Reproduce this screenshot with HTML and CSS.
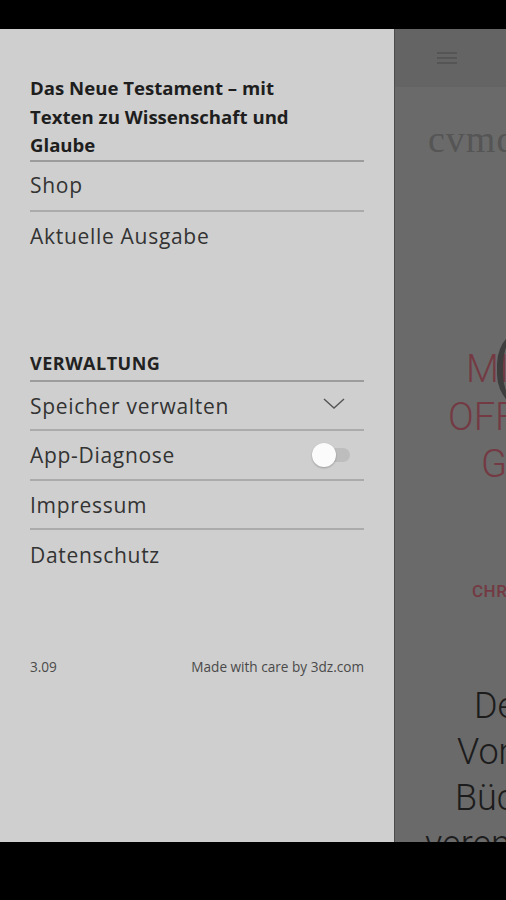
FILE: index.html
```html
<!DOCTYPE html>
<html lang="de">
<head>
<meta charset="utf-8">
<title>Menü</title>
<link rel="stylesheet" href="styles.css">
</head>
<body>
<div class="screen">
  <div class="statusbar"></div>
  <div class="app">
    <nav class="drawer">
      <h1 class="title">Das Neue Testament – mit Texten zu Wissenschaft und Glaube</h1>
      <ul class="list">
        <li class="item">Shop</li>
        <li class="item last">Aktuelle Ausgabe</li>
      </ul>
      <h2 class="section">VERWALTUNG</h2>
      <ul class="list lower">
        <li class="item row">Speicher verwalten
          <svg class="chevron" width="24" height="14" viewBox="0 0 24 14"><path d="M2 2 L12 11 L22 2" fill="none" stroke="#555" stroke-width="1.4"/></svg>
        </li>
        <li class="item row">App-Diagnose
          <span class="toggle"><span class="thumb"></span></span>
        </li>
        <li class="item">Impressum</li>
        <li class="item last">Datenschutz</li>
      </ul>
      <footer class="footer">
        <span>3.09</span>
        <span>Made with care by 3dz.com</span>
      </footer>
    </nav>
    <main class="content">
      <header class="topbar">
        <span class="burger"><i></i><i></i><i></i></span>
      </header>
      <div class="logo">cvmd</div>
      <div class="hero">
        <div class="hero-art"></div>
        <p class="hl l1">MIT</p>
        <p class="hl l2">OFFENEN</p>
        <p class="hl l3">GEDANKEN</p>
      </div>
      <p class="kicker">CHRISTEN</p>
      <div class="lead">
        <p class="ld d1">Der</p>
        <p class="ld d2">Vom</p>
        <p class="ld d3">Bücher</p>
        <p class="ld d4">verenden</p>
      </div>
    </main>
  </div>
  <div class="navbar"></div>
</div>
</body>
</html>
```

FILE: styles.css
```css
* { box-sizing: border-box; }
html, body { margin: 0; padding: 0; background: #000; }
.screen { width: 506px; height: 900px; display: flex; flex-direction: column; overflow: hidden; }
.statusbar { height: 29px; background: #000; flex: none; }
.navbar { height: 58px; background: #000; flex: none; }
.app { flex: 1; display: flex; min-height: 0; }

.drawer {
  width: 395px; flex: none;
  background: #cfcfcf;
  border-right: 1px solid #4c4c4c;
  padding: 45px 30px 0 30px;
  display: flex; flex-direction: column;
  font-family: "Open Sans", "Noto Sans", sans-serif;
  color: #2a2a2a;
}
.title {
  margin: 0;
  font-size: 18.6px; font-weight: 700; line-height: 28.5px;
  color: #1e1e1e;
  padding-right: 40px;
  border-bottom: 2px solid #9c9c9c;
}
.list { list-style: none; margin: 0; padding: 0; }
.item {
  height: 50px;
  display: flex; align-items: center;
  font-size: 21px; letter-spacing: 0.7px; color: #333;
  border-bottom: 2px solid #ababab;
  padding-bottom: 1px;
}
.lower .item { height: 49.5px; padding-bottom: 0; padding-top: 1px; }
.item.last { border-bottom: none; }
.row { justify-content: space-between; }
.chevron { margin-right: 18px; margin-top: -4px; }
.toggle {
  position: relative;
  width: 36px; height: 14px; border-radius: 7px;
  background: #bdbdbd; margin-right: 14px;
}
.thumb {
  position: absolute; left: -2px; top: -5px;
  width: 24px; height: 24px; border-radius: 50%;
  background: #fbfbfb;
  box-shadow: 0 1px 2px rgba(0,0,0,0.25);
}
.section {
  margin: 84px 0 0 0;
  font-size: 18px; letter-spacing: 0.5px; font-weight: 700; color: #222;
  height: 36px; line-height: 34px;
  border-bottom: 2px solid #9c9c9c;
}
.footer {
  margin-top: 77px;
  display: flex; justify-content: space-between;
  font-size: 13.6px; color: #4a4a4a;
}

.content {
  flex: 1; min-width: 0;
  background: #6a6a6a;
  overflow: hidden;
  font-family: Roboto, "Liberation Sans", sans-serif;
}
.topbar {
  height: 58px; background: #646464;
  display: flex; align-items: center;
  padding-left: 42px;
}
.burger { display: flex; flex-direction: column; gap: 3px; }
.burger i { display: block; width: 20px; height: 2px; background: #555; }
.logo {
  margin: 30px 0 0 33px;
  font-family: "Liberation Serif", "DejaVu Serif", serif;
  font-size: 38px; color: #555; letter-spacing: 1px;
  white-space: nowrap; line-height: 44px;
}
.hero { position: relative; margin-top: 185px; }
.hero-art {
  position: absolute; left: 102px; top: -22px;
  width: 40px; height: 90px; border-radius: 40px 0 0 40px;
  border-left: 6px solid #3e3e3e;
}
.hl {
  margin: 0; white-space: nowrap;
  font-size: 38px; font-weight: 300; line-height: 47.5px;
  color: #743a43;
}
.l1 { padding-left: 71px; }
.l2 { padding-left: 53px; }
.l3 { padding-left: 86px; }
.kicker {
  margin: 92px 0 0 77px; white-space: nowrap;
  font-size: 17px; font-weight: 500; color: #743a43; letter-spacing: 0.5px;
}
.lead { margin-top: 82px; }
.ld {
  margin: 0; white-space: nowrap;
  font-size: 36px; font-weight: 300; line-height: 46px;
  color: #1c1c1c;
}
.d1 { padding-left: 79px; }
.d2 { padding-left: 62px; }
.d3 { padding-left: 60px; }
.d4 { padding-left: 30px; }
```
